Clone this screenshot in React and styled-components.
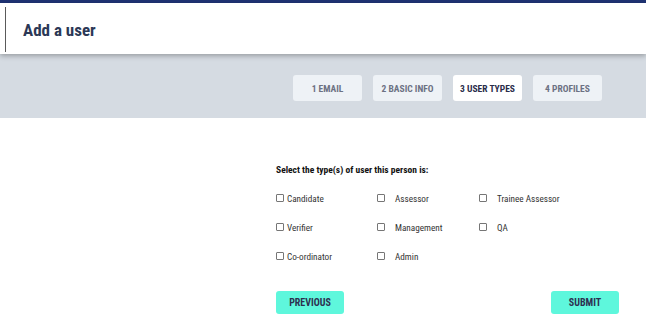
import styled, { createGlobalStyle } from "styled-components";

const GlobalStyle = createGlobalStyle`
  body {
    margin: 0;
    background: #fff;
    font-family: "Roboto Condensed", "Liberation Sans Narrow", "DejaVu Sans Condensed", Roboto, sans-serif;
  }
`;

const Page = styled.div`
  width: 646px;
  min-height: 336px;
  border-top: 3px solid #1f3373;
  box-sizing: border-box;
`;

const Header = styled.header`
  height: 51px;
  padding: 4px 0 2px 5px;
  box-sizing: border-box;
  background: #fff;
  position: relative;
  z-index: 1;
  box-shadow: 0 2px 5px rgba(0, 0, 0, 0.28);
`;

const Title = styled.h1`
  margin: 0;
  height: 45px;
  border-left: 1px solid #5a5a5a;
  padding-left: 17px;
  display: flex;
  align-items: center;
  font-size: 17px;
  font-weight: 700;
  color: #2b3856;
`;

const Band = styled.div`
  height: 64px;
  background: #d5dbe2;
  padding: 21px 0 0 293px;
  box-sizing: border-box;
  display: flex;
  gap: 11px;
`;

const Tab = styled.div`
  width: 69px;
  height: 26px;
  border-radius: 3px;
  background: ${(p) => (p.$active ? "#ffffff" : "#eef2f6")};
  color: ${(p) => (p.$active ? "#2a2c4a" : "#6c7183")};
  font-size: 9.5px;
  font-weight: 700;
  display: flex;
  align-items: center;
  justify-content: center;
`;

const Content = styled.div`
  padding: 46px 0 0 276px;
`;

const Prompt = styled.p`
  margin: 0 0 17px;
  font-size: 9.5px;
  font-weight: 700;
  color: #111;
`;

const Grid = styled.div`
  display: grid;
  grid-template-columns: 101px 102px auto;
  row-gap: 17px;
`;

const Option = styled.label`
  display: flex;
  align-items: center;
  gap: ${(p) => (p.$wide ? "10px" : "3px")};
  height: 12px;
  font-size: 9.2px;
  color: #333;
`;

const Box = styled.span`
  width: 6px;
  height: 6px;
  border: 1px solid #767676;
  border-radius: 1px;
  background: #fff;
`;

const Actions = styled.div`
  display: flex;
  justify-content: space-between;
  width: 343px;
  margin-top: 29px;
`;

const Button = styled.button`
  width: 68px;
  height: 23px;
  border: none;
  border-radius: 3px;
  background: #5ef7dc;
  color: #2d3050;
  font-family: inherit;
  font-size: 10px;
  font-weight: 700;
  padding: 0;
`;

const tabs = ["1 EMAIL", "2 BASIC INFO", "3 USER TYPES", "4 PROFILES"];
const types = [
  "Candidate",
  "Assessor",
  "Trainee Assessor",
  "Verifier",
  "Management",
  "QA",
  "Co-ordinator",
  "Admin",
];

const App = () => {
  return (
    <Page>
      <GlobalStyle />
      <Header>
        <Title>Add a user</Title>
      </Header>
      <Band>
        {tabs.map((t, i) => (
          <Tab key={t} $active={i === 2}>
            {t}
          </Tab>
        ))}
      </Band>
      <Content>
        <Prompt>Select the type(s) of user this person is:</Prompt>
        <Grid>
          {types.map((t, i) => (
            <Option key={t} $wide={i % 3 !== 0}>
              <Box />
              {t}
            </Option>
          ))}
        </Grid>
        <Actions>
          <Button>PREVIOUS</Button>
          <Button>SUBMIT</Button>
        </Actions>
      </Content>
    </Page>
  );
};

export default App;
